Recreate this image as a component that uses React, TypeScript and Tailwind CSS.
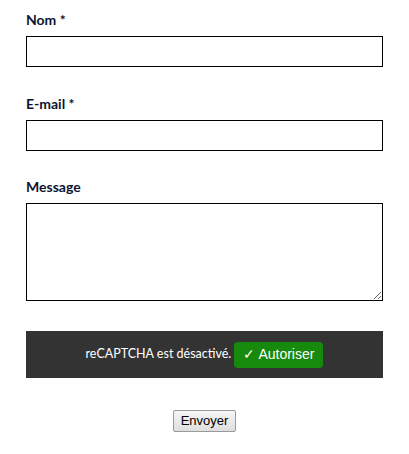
import type React from "react";

const labelClass =
  "block text-[14px] leading-[16px] font-bold text-[#0b1530] font-['Lato',sans-serif]";

const Field: React.FC<{ label: string; multiline?: boolean }> = ({ label, multiline }) => {
  return (
    <div className="flex flex-col gap-[8px]">
      <label className={labelClass}>{label}</label>
      {multiline ? (
        <textarea className="w-full h-[98px] border border-black bg-white resize-y block" />
      ) : (
        <input type="text" className="w-full h-[31px] border border-black bg-white block" />
      )}
    </div>
  );
};

export default function App() {
  return (
    <div className="w-[409px] h-[454px] bg-white px-[26px] pt-[12px]">
      <form className="flex flex-col">
        <Field label="Nom *" />
        <div className="mt-[29px]">
          <Field label="E-mail *" />
        </div>
        <div className="mt-[28px]">
          <Field label="Message" multiline />
        </div>

        {/* recaptcha placeholder */}
        <div className="mt-[30px] h-[47px] bg-[#333333] flex items-center justify-center gap-[3px]">
          <span className="text-white text-[12.5px] font-['Lato',sans-serif]">
            reCAPTCHA est désactivé.
          </span>
          <button
            type="button"
            className="h-[26px] px-[9px] rounded-[4px] bg-[#158a0c] text-white text-[14px] font-['Liberation_Sans',Arial,sans-serif]"
          >
            ✓ Autoriser
          </button>
        </div>

        <div className="mt-[32px] flex justify-center">
          <button
            type="submit"
            className="h-[22px] px-[7px] border border-[#9a9a9a] rounded-[2px] bg-gradient-to-b from-[#f6f6f6] to-[#dedede] text-[13px] text-black font-['Liberation_Sans',Arial,sans-serif]"
          >
            Envoyer
          </button>
        </div>
      </form>
    </div>
  );
}
